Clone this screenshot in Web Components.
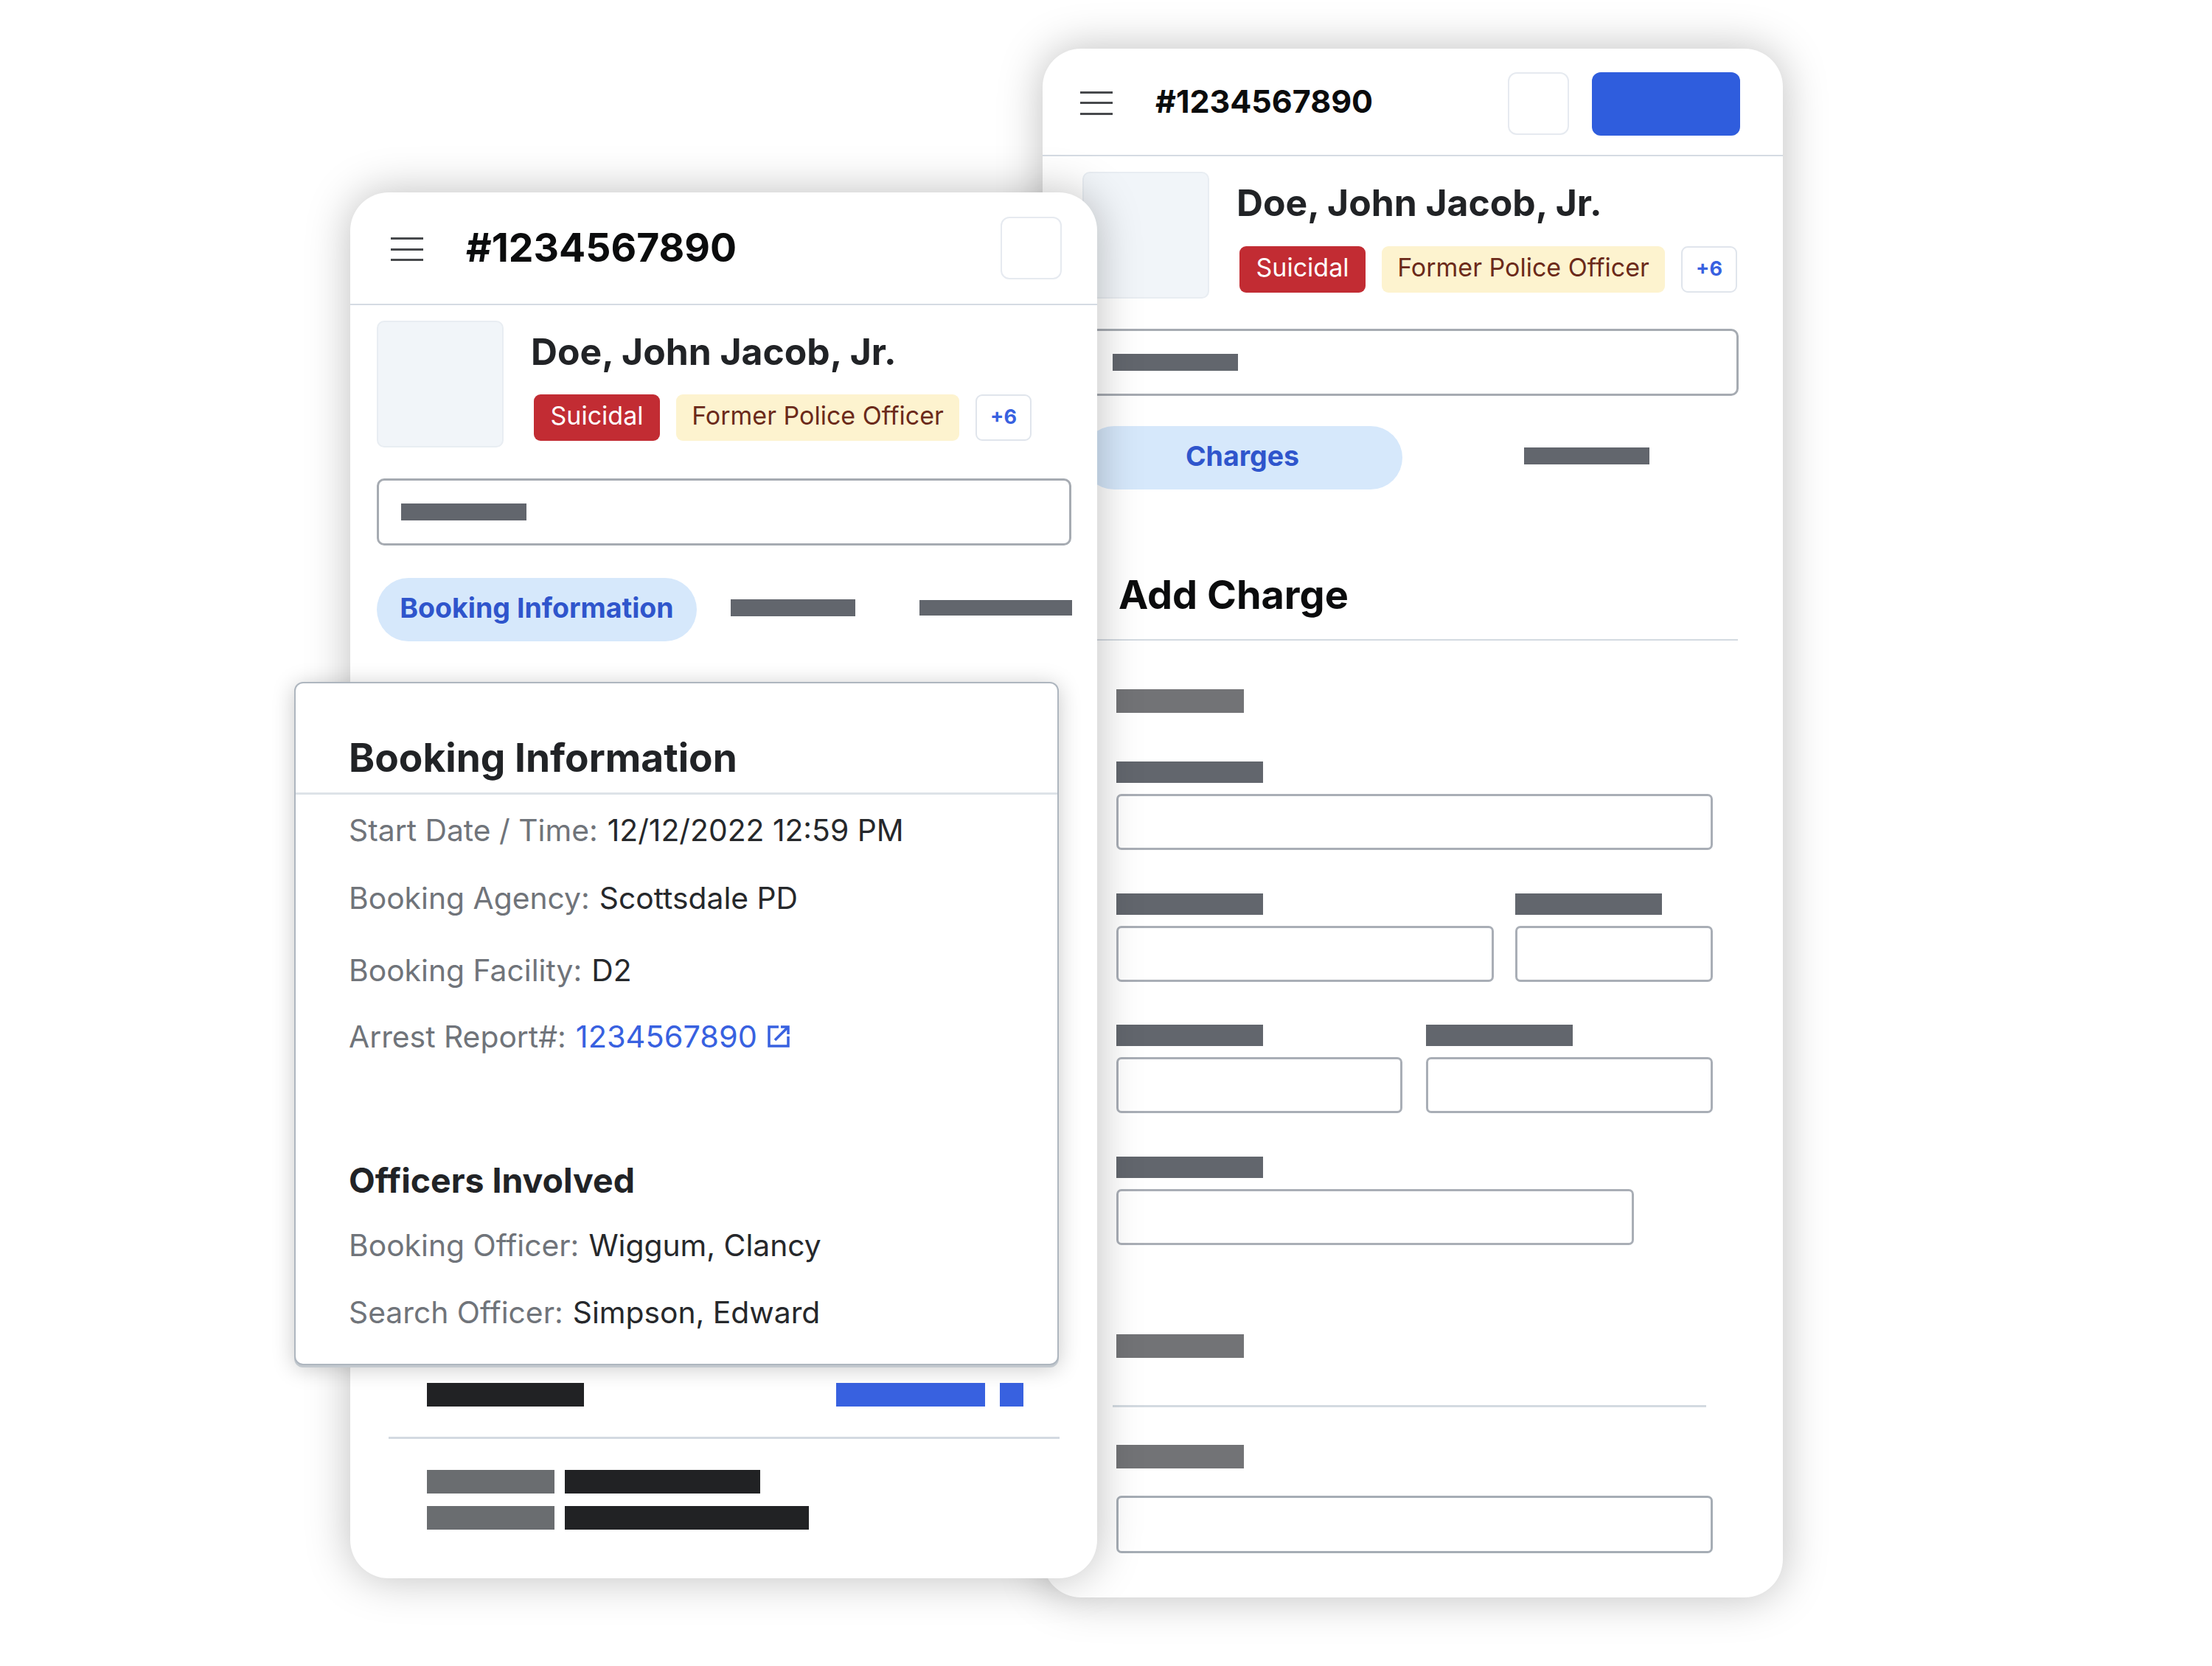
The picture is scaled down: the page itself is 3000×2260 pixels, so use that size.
<!DOCTYPE html>
<html lang="en">
<head>
<meta charset="utf-8">
<title>Booking</title>
<style>
    body { margin: 0; background: #fff; font-family: "Inter", "Liberation Sans", sans-serif; }
</style>
</head>
<body>
<screen-stage>
    <device-card style="left: 1414px; top: 66px; width: 1004px; height: 2101px; --pad-left: 54px; --pad-right: 61px;">
        <top-bar slot="bar" label="#1234567890" style="--title-size: 43px; --left: 51px; --right: 58px; --bar-top: 32px; --bar-bottom: 26px; --title-lift: 8px; --burger-top: 0px; --burger-bottom: 3px;">
            <square-button></square-button>
            <blue-button></blue-button>
        </top-bar>
        <person-summary style="margin-top: 21px; --badge-top: 29px;"></person-summary>
        <search-box style="margin-top: 41px; margin-left: 8px; --bar-left: 30px;"></search-box>
        <tab-row style="margin-top: 41px; --tab-width: 434px; --tab-gap: 165px;">
            <tab-pill>Charges</tab-pill>
            <redact-bar style="--w: 170px; --h: 23px; --c: #62666d;"></redact-bar>
        </tab-row>
        <charge-form></charge-form>
    </device-card>

    <device-card style="left: 475px; top: 261px; width: 1013px; height: 1880px; --pad-left: 36px; --pad-right: 36px;">
        <top-bar slot="bar" label="#1234567890" style="--title-size: 53.5px; --left: 55px; --right: 48px; --bar-top: 33px; --bar-bottom: 33px; --title-lift: 3px; --burger-top: 3px; --burger-bottom: 0px;">
            <square-button></square-button>
        </top-bar>
        <person-summary style="margin-top: 21px;"></person-summary>
        <search-box style="margin-top: 42px;"></search-box>
        <tab-row style="margin-top: 44px; --tab-width: 434px; --tab-gap: 46px;">
            <tab-pill>Booking Information</tab-pill>
            <redact-bar style="--w: 169px; --h: 23px; --c: #62666d;"></redact-bar>
            <redact-bar style="--w: 207px; --h: 21px; --c: #62666d; margin-left: 41px;"></redact-bar>
        </tab-row>
        <booking-summary></booking-summary>
    </device-card>

    <booking-popup style="left: 399px; top: 925px; width: 1037px; height: 927px;"></booking-popup>
</screen-stage>

<script>
class ScreenStage extends HTMLElement {
    constructor() {
        super();
        this.attachShadow({ mode: "open" });
        this.shadowRoot.innerHTML = `
            <style>
                :host {
                    display: block;
                    position: relative;
                    width: 3000px;
                    height: 2260px;
                    overflow: hidden;
                    background: white;
                }
            </style>
            <slot></slot>
        `;
    }
}

class DeviceCard extends HTMLElement {
    constructor() {
        super();
        this.attachShadow({ mode: "open" });
        this.shadowRoot.innerHTML = `
            <style>
                :host {
                    display: flex;
                    flex-direction: column;
                    position: absolute;
                    box-sizing: border-box;
                    background: white;
                    border-radius: 52px;
                    box-shadow: 0 0 60px rgba(0, 0, 0, .26);
                }

                .body {
                    display: flex;
                    flex-direction: column;
                    padding: 0 var(--pad-right) 0 var(--pad-left);
                }
            </style>
            <slot name="bar"></slot>
            <div class="body"><slot></slot></div>
        `;
    }
}

class TopBar extends HTMLElement {
    constructor() {
        super();
        this.attachShadow({ mode: "open" });
        this.shadowRoot.innerHTML = `
            <style>
                :host {
                    display: flex;
                    align-items: center;
                    padding: var(--bar-top) var(--right) var(--bar-bottom) var(--left);
                    border-bottom: 2px solid #d5dbe3;
                }

                .burger {
                    display: flex;
                    flex-direction: column;
                    justify-content: space-between;
                    flex: none;
                    width: 44px;
                    height: 32px;
                    margin: var(--burger-top) 58px var(--burger-bottom) 0;
                }

                .burger i {
                    display: block;
                    height: 3px;
                    background: #47494c;
                }

                .title {
                    flex: 1;
                    margin-bottom: var(--title-lift);
                    font-size: var(--title-size);
                    font-weight: 700;
                    color: #0b0c0d;
                }

                .actions {
                    display: flex;
                    gap: 31px;
                }
            </style>
            <div class="burger"><i></i><i></i><i></i></div>
            <div class="title">${this.getAttribute("label")}</div>
            <div class="actions"><slot></slot></div>
        `;
    }
}

class SquareButton extends HTMLElement {
    constructor() {
        super();
        this.attachShadow({ mode: "open" });
        this.shadowRoot.innerHTML = `
            <style>
                :host {
                    display: block;
                    box-sizing: border-box;
                    width: 83px;
                    height: 85px;
                    background: white;
                    border: 2px solid #e6eaf0;
                    border-radius: 12px;
                }
            </style>
        `;
    }
}

class BlueButton extends HTMLElement {
    constructor() {
        super();
        this.attachShadow({ mode: "open" });
        this.shadowRoot.innerHTML = `
            <style>
                :host {
                    display: block;
                    width: 201px;
                    height: 86px;
                    background: #2f5ddd;
                    border-radius: 12px;
                }
            </style>
        `;
    }
}

class PersonSummary extends HTMLElement {
    constructor() {
        super();
        this.attachShadow({ mode: "open" });
        this.shadowRoot.innerHTML = `
            <style>
                :host {
                    display: flex;
                    gap: 40px;
                }

                .photo {
                    box-sizing: border-box;
                    flex: none;
                    width: 172px;
                    height: 172px;
                    background: #f1f5f9;
                    border: 2px solid #e8edf2;
                    border-radius: 10px;
                }

                .name {
                    margin: 12px 0 0 -3px;
                    font-size: 49.8px;
                    line-height: 60px;
                    font-weight: 700;
                    color: #212326;
                }

                .badges {
                    display: flex;
                    gap: 22px;
                    margin-top: var(--badge-top, 28px);
                    margin-left: 1px;
                }

                .badge {
                    display: flex;
                    align-items: center;
                    justify-content: center;
                    box-sizing: border-box;
                    height: 63px;
                    padding-bottom: 6px;
                    border-radius: 9px;
                    font-size: 34px;
                }

                .red {
                    width: 171px;
                    background: #c22c33;
                    color: white;
                }

                .cream {
                    width: 384px;
                    background: #fdf3cf;
                    color: #6b2a1a;
                }

                .more {
                    width: 76px;
                    padding-bottom: 2px;
                    background: white;
                    border: 2px solid #e0e5ec;
                    color: #3861e0;
                    font-size: 27px;
                    font-weight: 700;
                }
            </style>
            <div class="photo"></div>
            <div>
                <div class="name">Doe, John Jacob, Jr.</div>
                <div class="badges">
                    <div class="badge red">Suicidal</div>
                    <div class="badge cream">Former Police Officer</div>
                    <div class="badge more">+6</div>
                </div>
            </div>
        `;
    }
}

class RedactBar extends HTMLElement {
    constructor() {
        super();
        this.attachShadow({ mode: "open" });
        this.shadowRoot.innerHTML = `
            <style>
                :host {
                    display: block;
                    flex: none;
                    width: var(--w);
                    height: var(--h);
                    background: var(--c);
                }
            </style>
        `;
    }
}

class SearchBox extends HTMLElement {
    constructor() {
        super();
        this.attachShadow({ mode: "open" });
        this.shadowRoot.innerHTML = `
            <style>
                :host {
                    display: flex;
                    align-items: center;
                    box-sizing: border-box;
                    height: 91px;
                    margin-right: -1px;
                    padding-left: var(--bar-left, 30px);
                    border: 3px solid #a6abb2;
                    border-radius: 10px;
                }
            </style>
            <redact-bar style="--w: 170px; --h: 23px; --c: #62666d;"></redact-bar>
        `;
    }
}

class TabRow extends HTMLElement {
    constructor() {
        super();
        this.attachShadow({ mode: "open" });
        this.shadowRoot.innerHTML = `
            <style>
                :host {
                    display: flex;
                    align-items: center;
                    gap: var(--tab-gap);
                    white-space: nowrap;
                }

                ::slotted(redact-bar) {
                    margin-top: -5px;
                }
            </style>
            <slot></slot>
        `;
    }
}

class TabPill extends HTMLElement {
    constructor() {
        super();
        this.attachShadow({ mode: "open" });
        this.shadowRoot.innerHTML = `
            <style>
                :host {
                    display: flex;
                    align-items: center;
                    justify-content: center;
                    flex: none;
                    box-sizing: border-box;
                    width: var(--tab-width);
                    height: 86px;
                    padding-bottom: 6px;
                    background: #d6e8fb;
                    border-radius: 43px;
                    color: #2f55cc;
                    font-size: 37.5px;
                    font-weight: 700;
                }
            </style>
            <slot></slot>
        `;
    }
}

class FormField extends HTMLElement {
    constructor() {
        super();
        this.attachShadow({ mode: "open" });
        this.shadowRoot.innerHTML = `
            <style>
                :host {
                    display: flex;
                    flex-direction: column;
                    gap: 15px;
                    width: var(--field);
                }

                .box {
                    box-sizing: border-box;
                    height: 76px;
                    border: 3px solid #a9aeb6;
                    border-radius: 7px;
                }
            </style>
            <redact-bar style="--w: 199px; --h: 29px; --c: #62666d;"></redact-bar>
            <div class="box"></div>
        `;
    }
}

class ChargeForm extends HTMLElement {
    constructor() {
        super();
        this.attachShadow({ mode: "open" });
        this.shadowRoot.innerHTML = `
            <style>
                :host {
                    display: block;
                }

                h2 {
                    margin: 108px 0 0;
                    padding: 0 0 25px 49px;
                    border-bottom: 2px solid #d3dae1;
                    font-size: 54px;
                    line-height: 70px;
                    font-weight: 700;
                    color: #0b0c0d;
                }

                .fields {
                    display: flex;
                    flex-direction: column;
                    gap: 58.5px;
                    width: 809px;
                    margin: 66px 0 0 46px;
                }

                .row {
                    display: flex;
                    justify-content: space-between;
                }

                .rule {
                    height: 3px;
                    margin: 64px 0 0 41px;
                    width: 805px;
                    background: #d3dae1;
                }

                .box {
                    box-sizing: border-box;
                    width: 809px;
                    height: 78px;
                    margin: 37px 0 0 46px;
                    border: 3px solid #a6adb5;
                    border-radius: 7px;
                }
            </style>
            <h2>Add Charge</h2>
            <div class="fields">
                <redact-bar style="--w: 173px; --h: 32px; --c: #727376; margin-bottom: 7.5px;"></redact-bar>
                <form-field style="--field: 809px;"></form-field>
                <div class="row">
                    <form-field style="--field: 512px;"></form-field>
                    <form-field style="--field: 268px;"></form-field>
                </div>
                <div class="row">
                    <form-field style="--field: 388px;"></form-field>
                    <form-field style="--field: 389px;"></form-field>
                </div>
                <form-field style="--field: 702px;"></form-field>
            </div>
            <redact-bar style="--w: 173px; --h: 32px; --c: #727376; margin: 121.5px 0 0 46px;"></redact-bar>
            <div class="rule"></div>
            <redact-bar style="--w: 173px; --h: 32px; --c: #727376; margin: 51px 0 0 46px;"></redact-bar>
            <div class="box"></div>
        `;
    }
}

class BookingSummary extends HTMLElement {
    constructor() {
        super();
        this.attachShadow({ mode: "open" });
        this.shadowRoot.innerHTML = `
            <style>
                :host {
                    display: block;
                    margin: 1006px 0 0 16px;
                }

                .row {
                    display: flex;
                    gap: 14px;
                    margin-left: 52px;
                }

                .head {
                    justify-content: space-between;
                    gap: 20px;
                    margin-right: 64px;
                }

                .head div {
                    display: flex;
                    gap: 20px;
                }

                .rule {
                    height: 3px;
                    margin: 41px 15px 42px 0;
                    background: #d3dae1;
                }
            </style>
            <div class="row head">
                <redact-bar style="--w: 213px; --h: 32px; --c: #212224;"></redact-bar>
                <div>
                    <redact-bar style="--w: 202px; --h: 32px; --c: #3861e0;"></redact-bar>
                    <redact-bar style="--w: 32px; --h: 32px; --c: #3861e0;"></redact-bar>
                </div>
            </div>
            <div class="rule"></div>
            <div class="row">
                <redact-bar style="--w: 173px; --h: 32px; --c: #6a6d70;"></redact-bar>
                <redact-bar style="--w: 265px; --h: 32px; --c: #212224;"></redact-bar>
            </div>
            <div class="row" style="margin-top: 17px;">
                <redact-bar style="--w: 173px; --h: 32px; --c: #6a6d70;"></redact-bar>
                <redact-bar style="--w: 331px; --h: 32px; --c: #212224;"></redact-bar>
            </div>
        `;
    }
}

class InfoRow extends HTMLElement {
    constructor() {
        super();
        this.attachShadow({ mode: "open" });
        this.shadowRoot.innerHTML = `
            <style>
                :host {
                    display: flex;
                    align-items: center;
                    gap: 13px;
                    height: 60px;
                    font-size: 40.8px;
                    white-space: nowrap;
                    color: #26282b;
                }

                .label {
                    color: #70747a;
                }
            </style>
            <span class="label">${this.getAttribute("label")}</span>
            <slot></slot>
        `;
    }
}

class BookingPopup extends HTMLElement {
    constructor() {
        super();
        this.attachShadow({ mode: "open" });
        this.shadowRoot.innerHTML = `
            <style>
                :host {
                    display: block;
                    position: absolute;
                    box-sizing: border-box;
                    background: white;
                    border: 2px solid #aeb6bf;
                    border-radius: 12px;
                    box-shadow: 0 3px 0 #c2c8ce, 0 4px 30px rgba(0, 0, 0, .22);
                }

                h2 {
                    margin: 0;
                    padding: 64px 0 10px 72px;
                    border-bottom: 3px solid #dde3e8;
                    font-size: 53.2px;
                    line-height: 74px;
                    font-weight: 700;
                    color: #212326;
                }

                .rows {
                    display: flex;
                    flex-direction: column;
                    padding-left: 72px;
                }

                h3 {
                    margin: 0;
                    font-size: 46.4px;
                    line-height: 60px;
                    font-weight: 700;
                    color: #212326;
                }

                a {
                    display: flex;
                    align-items: center;
                    gap: 14px;
                    color: #3861e0;
                    font-size: 41.5px;
                    text-decoration: none;
                }

                svg {
                    width: 30px;
                    height: 30px;
                    fill: none;
                    stroke: currentColor;
                    stroke-width: 3.5;
                }
            </style>
            <h2>Booking Information</h2>
            <div class="rows">
                <info-row label="Start Date / Time:" style="margin-top: 18px;">12/12/2022 12:59 PM</info-row>
                <info-row label="Booking Agency:" style="margin-top: 31.5px;">Scottsdale PD</info-row>
                <info-row label="Booking Facility:" style="margin-top: 38px;">D2</info-row>
                <info-row label="Arrest Report#:" style="margin-top: 30.5px;">
                    <a>1234567890
                        <svg viewBox="0 0 30 30"><path d="M15 2H2v26h26V15"/><path d="M10 20L27 3"/><path d="M18 2h10v10"/></svg>
                    </a>
                </info-row>
                <h3 style="margin-top: 135px;">Officers Involved</h3>
                <info-row label="Booking Officer:" style="margin-top: 28px;">Wiggum, Clancy</info-row>
                <info-row label="Search Officer:" style="margin-top: 31px;">Simpson, Edward</info-row>
            </div>
        `;
    }
}

customElements.define("screen-stage", ScreenStage);
customElements.define("device-card", DeviceCard);
customElements.define("top-bar", TopBar);
customElements.define("square-button", SquareButton);
customElements.define("blue-button", BlueButton);
customElements.define("person-summary", PersonSummary);
customElements.define("redact-bar", RedactBar);
customElements.define("search-box", SearchBox);
customElements.define("tab-row", TabRow);
customElements.define("tab-pill", TabPill);
customElements.define("form-field", FormField);
customElements.define("charge-form", ChargeForm);
customElements.define("booking-summary", BookingSummary);
customElements.define("info-row", InfoRow);
customElements.define("booking-popup", BookingPopup);
</script>
</body>
</html>
